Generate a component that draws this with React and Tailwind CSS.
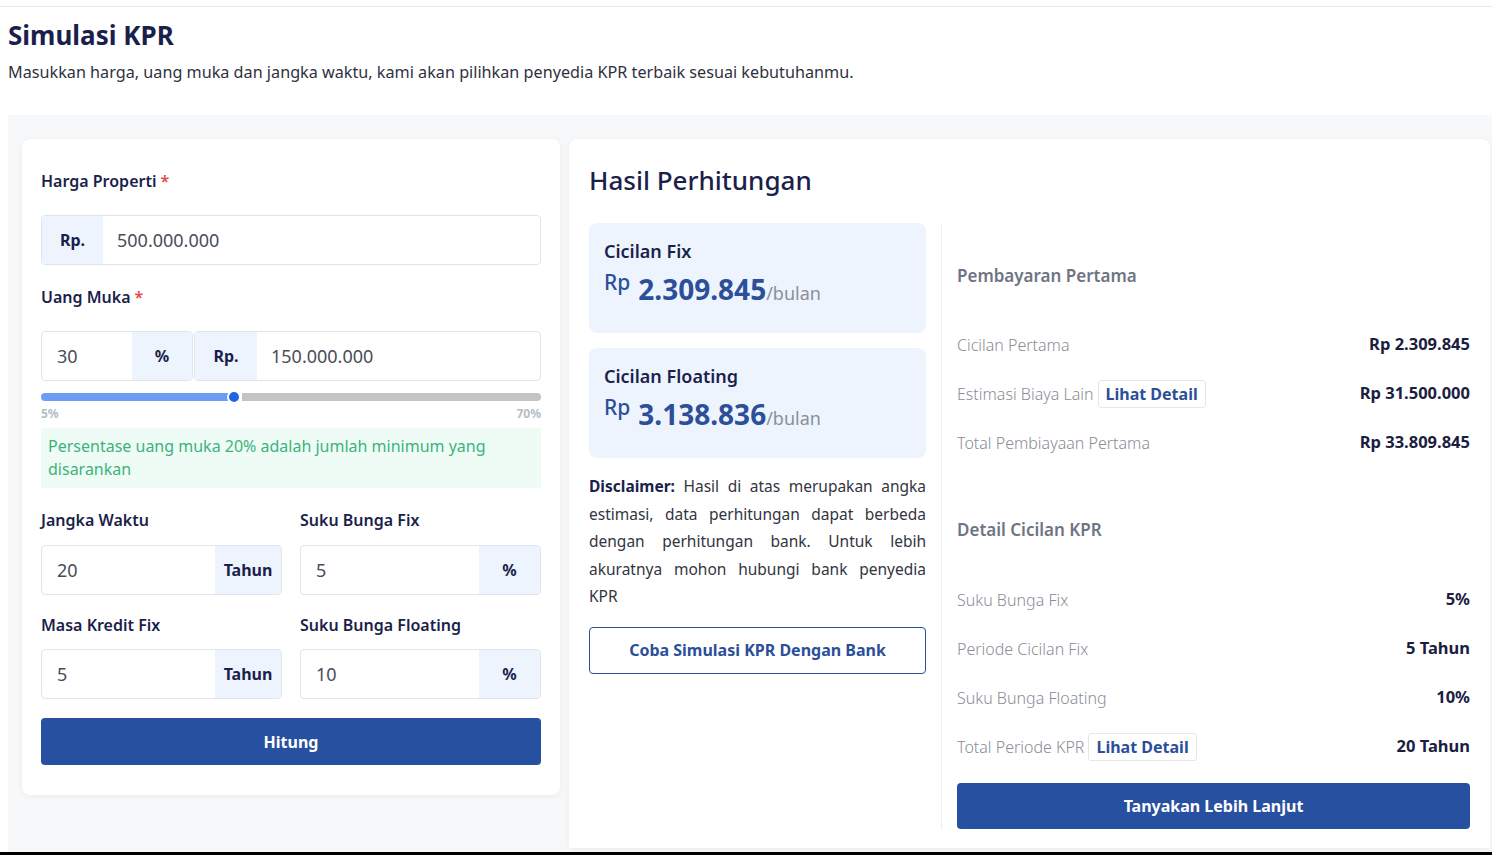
import React from 'react';

const navy = 'text-[#1b1f4b]';

const Label = ({ children, required, className = '' }) => (
  <div className={`text-[16px] leading-[20px] font-semibold text-[#1b1f4b] ${className}`}>
    {children}
    {required && <span className="text-[#e5484d] ml-1">*</span>}
  </div>
);

const Addon = ({ children, className = '' }) => (
  <div className={`flex items-center justify-center bg-[#eef4fd] text-[16px] font-bold text-[#1b1f4b] ${className}`}>
    {children}
  </div>
);

const Value = ({ children, className = '' }) => (
  <div className={`flex items-center text-[18px] text-[#4a4d57] ${className}`}>{children}</div>
);

const SuffixInput = ({ value, suffix, suffixW }) => (
  <div className="flex h-[50px] border border-[#e1e4ea] rounded-[4px] overflow-hidden">
    <Value className="flex-1 pl-[15px]">{value}</Value>
    <Addon className={suffixW}>{suffix}</Addon>
  </div>
);

const Row = ({ label, value, detail }) => (
  <div className="h-[49px] flex items-center justify-between">
    <div className="flex items-center gap-[4px]">
      <span className="text-[16px] font-light text-[#8a8d96]">{label}</span>
      {detail && (
        <span className="h-[28px] px-[7px] flex items-center border border-[#e3e6eb] rounded-[3px] text-[16px] font-bold text-[#2b4f98]">
          Lihat Detail
        </span>
      )}
    </div>
    <span className="text-[16.5px] font-bold text-[#1b1e3f]">{value}</span>
  </div>
);

const ResultBox = ({ title, amount }) => (
  <div className="h-[110px] bg-[#eef4fe] rounded-[8px] px-[15px] pt-[16px]">
    <div className={`text-[18px] leading-[24px] font-semibold ${navy}`}>{title}</div>
    <div className="mt-[8px] flex items-end text-[#2b4f98]">
      <span className="text-[21px] leading-[22px] font-medium self-start mr-[8px]">Rp</span>
      <span className="text-[28px] leading-[36px] font-bold">{amount}</span>
      <span className="text-[18px] leading-[27px] text-[#8a8f9c]">/bulan</span>
    </div>
  </div>
);

const disclaimer = [
  'Hasil di atas merupakan angka',
  'estimasi, data perhitungan dapat berbeda',
  'dengan perhitungan bank. Untuk lebih',
  'akuratnya mohon hubungi bank penyedia',
];

export default function App() {
  return (
    <div className="w-[1492px] h-[855px] overflow-hidden bg-white font-['Noto_Sans',sans-serif] flex flex-col">
      <div className="h-[7px] border-b border-[#e8e9ec] shrink-0" />

      {/* Header */}
      <div className="pl-[8px] pt-[12px] h-[108px] shrink-0">
        <h1 className={`text-[26px] leading-[32px] font-bold ${navy}`}>Simulasi KPR</h1>
        <p className="mt-[11px] text-[16.2px] leading-[20px] text-[#2f3140]">
          Masukkan harga, uang muka dan jangka waktu, kami akan pilihkan penyedia KPR terbaik sesuai kebutuhanmu.
        </p>
      </div>

      <div className="flex-1 ml-[8px] bg-[#f7f8fa] pl-[14px] pr-[2px] pt-[24px] flex gap-[9px] items-start">
        {/* Form card */}
        <div className="w-[538px] bg-white rounded-[8px] shadow-[0_1px_6px_rgba(0,0,0,0.06)] pt-[32px] px-[19px] pb-[30px]">
          <Label required>Harga Properti</Label>
          <div className="mt-[24px] flex h-[50px] border border-[#e1e4ea] rounded-[4px] overflow-hidden">
            <Addon className="w-[61px]">Rp.</Addon>
            <Value className="pl-[14px]">500.000.000</Value>
          </div>

          <Label required className="mt-[22px]">Uang Muka</Label>
          <div className="mt-[24px] flex h-[50px] gap-[1px]">
            <div className="w-[152px] flex border border-[#e1e4ea] rounded-[4px] overflow-hidden">
              <Value className="flex-1 pl-[15px]">30</Value>
              <Addon className="w-[60px]">%</Addon>
            </div>
            <div className="flex-1 flex border border-[#e1e4ea] rounded-[4px] overflow-hidden">
              <Addon className="w-[62px]">Rp.</Addon>
              <Value className="pl-[14px]">150.000.000</Value>
            </div>
          </div>

          {/* Slider */}
          <div className="relative mt-[12px] h-[8px] flex">
            <div className="w-[187px] h-full bg-[#6b9cf6] rounded-l-full" />
            <div className="w-[14px]" />
            <div className="flex-1 h-full bg-[#c4c4c4] rounded-r-full" />
            <div className="absolute left-[186px] top-[-3px] w-[14px] h-[14px] rounded-full bg-[#1f65e6] border-2 border-white" />
          </div>
          <div className="mt-[7px] flex justify-between text-[12px] leading-[12px] font-bold text-[#b7bcc7]">
            <span>5%</span>
            <span>70%</span>
          </div>

          <div className="mt-[8px] bg-[#effcf5] px-[7px] py-[7px] text-[16px] leading-[23px] text-[#3bb37c]">
            Persentase uang muka 20% adalah jumlah minimum yang
            <br />
            disarankan
          </div>

          <div className="mt-[22px] grid grid-cols-2 gap-x-[18px]">
            <div>
              <Label>Jangka Waktu</Label>
              <div className="mt-[15px]">
                <SuffixInput value="20" suffix="Tahun" suffixW="w-[66px]" />
              </div>
            </div>
            <div>
              <Label>Suku Bunga Fix</Label>
              <div className="mt-[15px]">
                <SuffixInput value="5" suffix="%" suffixW="w-[61px]" />
              </div>
            </div>
            <div className="mt-[20px]">
              <Label>Masa Kredit Fix</Label>
              <div className="mt-[14px]">
                <SuffixInput value="5" suffix="Tahun" suffixW="w-[66px]" />
              </div>
            </div>
            <div className="mt-[20px]">
              <Label>Suku Bunga Floating</Label>
              <div className="mt-[14px]">
                <SuffixInput value="10" suffix="%" suffixW="w-[61px]" />
              </div>
            </div>
          </div>

          <button className="mt-[19px] w-full h-[47px] bg-[#2850a0] rounded-[4px] text-white text-[16px] font-bold">
            Hitung
          </button>
        </div>

        {/* Result card */}
        <div className="flex-1 self-stretch mb-[4px] bg-white rounded-t-[8px] shadow-[0_1px_6px_rgba(0,0,0,0.06)] pt-[24px] pl-[20px] pr-[20px] pb-[18px] flex flex-col">
          <h2 className={`text-[26px] leading-[34px] font-medium ${navy}`}>Hasil Perhitungan</h2>
          <div className="mt-[26px] flex flex-1">
            <div className="w-[337px] shrink-0">
              <ResultBox title="Cicilan Fix" amount="2.309.845" />
              <div className="mt-[15px]">
                <ResultBox title="Cicilan Floating" amount="3.138.836" />
              </div>
              <div className="mt-[15px] text-[15.5px] leading-[27.6px] text-[#33353f]">
                {disclaimer.map((line, i) => (
                  <div key={i} className="text-justify [text-align-last:justify] whitespace-nowrap">
                    {i === 0 && <span className={`font-bold ${navy}`}>Disclaimer: </span>}
                    {line}
                  </div>
                ))}
                <div>KPR</div>
              </div>
              <button className="mt-[16px] w-full h-[47px] border border-[#2b4f98] rounded-[4px] text-[16px] font-bold text-[#2b4f98]">
                Coba Simulasi KPR Dengan Bank
              </button>
            </div>

            <div className="ml-[15px] flex-1 border-l border-[#eceef1] pl-[15px] pt-[41px]">
              <div className="text-[17px] leading-[24px] font-semibold text-[#6f7484]">Pembayaran Pertama</div>
              <div className="mt-[32px]">
                <Row label="Cicilan Pertama" value="Rp 2.309.845" />
                <Row label="Estimasi Biaya Lain" value="Rp 31.500.000" detail />
                <Row label="Total Pembiayaan Pertama" value="Rp 33.809.845" />
              </div>

              <div className="mt-[51px] text-[17px] leading-[24px] font-semibold text-[#6f7484]">Detail Cicilan KPR</div>
              <div className="mt-[33px]">
                <Row label="Suku Bunga Fix" value="5%" />
                <Row label="Periode Cicilan Fix" value="5 Tahun" />
                <Row label="Suku Bunga Floating" value="10%" />
                <Row label="Total Periode KPR" value="20 Tahun" detail />
              </div>
              <button className="mt-[12px] w-full h-[46px] bg-[#2850a0] rounded-[4px] text-white text-[16px] font-bold">
                Tanyakan Lebih Lanjut
              </button>
            </div>
          </div>
        </div>
      </div>

      <div className="h-[3px] bg-black shrink-0" />
    </div>
  );
}
